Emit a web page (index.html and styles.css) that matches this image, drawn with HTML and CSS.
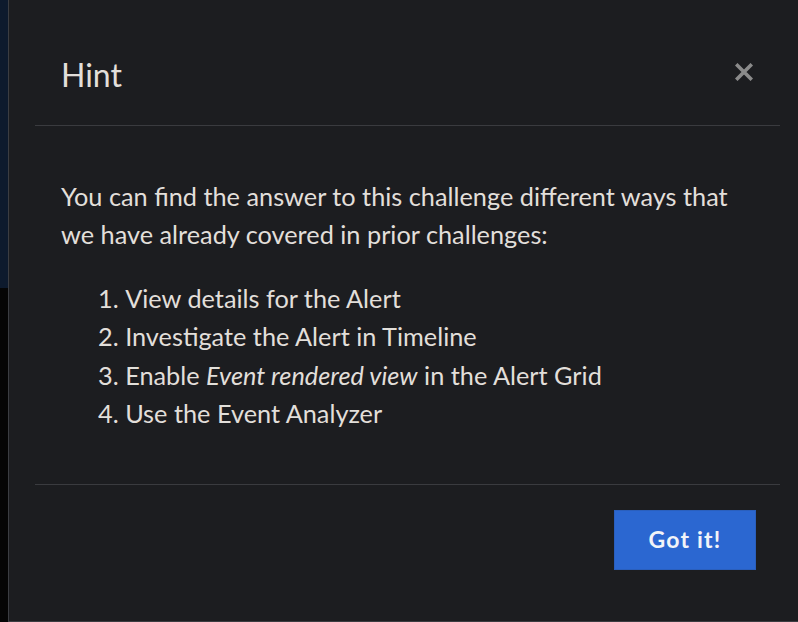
FILE: index.html
```html
<!DOCTYPE html>
<html>
<head>
<meta charset="utf-8">
<link rel="stylesheet" href="styles.css">
</head>
<body>
<div class="page">
  <div class="backdrop">
    <div class="backdrop-top"></div>
    <div class="backdrop-bottom"></div>
  </div>
  <div class="modal">
    <div class="modal-header">
      <h2 class="modal-title">Hint</h2>
      <button class="close" aria-label="Close">
        <svg width="18" height="18" viewBox="0 0 18 18"><path d="M2.5 2.5 L15.5 15.5 M15.5 2.5 L2.5 15.5" stroke="#8b8b8b" stroke-width="3.6" stroke-linecap="square"/></svg>
      </button>
    </div>
    <div class="divider"></div>
    <div class="modal-body">
      <p class="intro">You can find the answer to this challenge different ways that we have already covered in prior challenges:</p>
      <ol class="steps">
        <li>View details for the Alert</li>
        <li>Investigate the Alert in Timeline</li>
        <li>Enable <em>Event rendered view</em> in the Alert Grid</li>
        <li>Use the Event Analyzer</li>
      </ol>
    </div>
    <div class="divider"></div>
    <div class="modal-footer">
      <button class="primary">Got it!</button>
    </div>
  </div>
</div>
</body>
</html>
```

FILE: styles.css
```css
html, body {
  margin: 0;
  padding: 0;
  background: #060606;
  overflow: hidden;
}
.page {
  display: flex;
  width: 798px;
  height: 622px;
  overflow: hidden;
  font-family: Lato, "Open Sans", sans-serif;
}
.backdrop {
  width: 8px;
  flex: none;
  display: flex;
  flex-direction: column;
}
.backdrop-top {
  height: 288px;
  background: #0d1a2d;
}
.backdrop-bottom {
  flex: 1;
  background: #050505;
}
.modal {
  flex: none;
  width: 797px;
  height: 621px;
  background: #1c1d20;
  border-left: 1px solid #3b3d42;
  border-bottom: 1px solid #3b3d42;
  display: flex;
  flex-direction: column;
  color: #e2dfda;
}
.modal-header {
  height: 125px;
  display: flex;
  align-items: center;
  justify-content: space-between;
  padding: 24px 53px 0 52px;
  box-sizing: border-box;
}
.modal-title {
  margin: 0;
  font-size: 32px;
  font-weight: 400;
  line-height: 1;
  color: #e2dfda;
}
.close {
  background: none;
  border: none;
  padding: 0;
  width: 18px;
  height: 18px;
  display: flex;
  position: relative;
  top: -3px;
}
.divider {
  height: 1px;
  background: #3a3b3f;
  margin: 0 26px;
}
.modal-body {
  padding: 51px 52px 52px;
  font-size: 25.3px;
  line-height: 38.4px;
}
.intro {
  margin: 0 0 25px;
}
.steps {
  margin: 0;
  padding-left: 37px;
  list-style-position: inside;
}
.modal-footer {
  display: flex;
  justify-content: flex-end;
  padding: 25px 50px 0 0;
}
.primary {
  width: 142px;
  height: 60px;
  background: #2b67d1;
  border: 1px solid #2a5fbd;
  color: #f2f4f8;
  font-family: Lato, sans-serif;
  font-weight: 700;
  font-size: 23px;
  letter-spacing: 1.2px;
  padding: 0 0 2px;
}
```
